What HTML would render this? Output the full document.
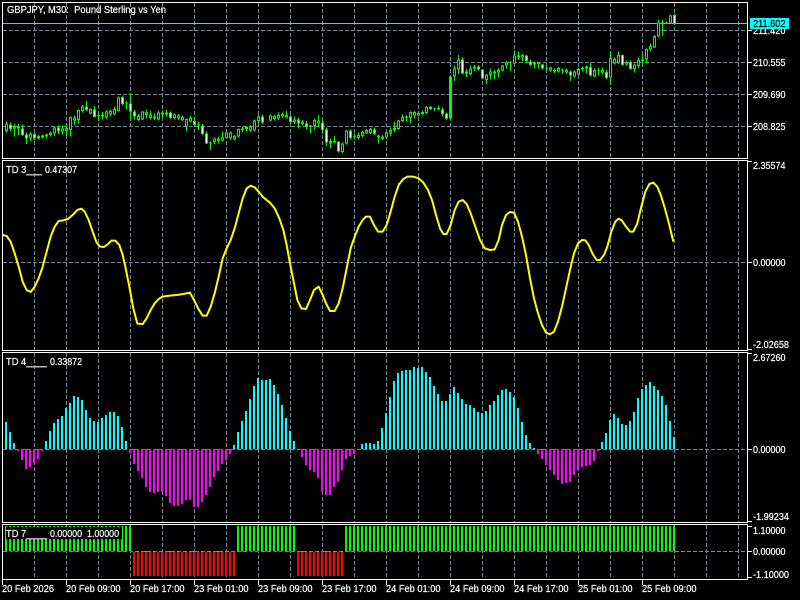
<!DOCTYPE html>
<html>
<head>
<meta charset="utf-8">
<style>
html,body{margin:0;padding:0;background:#000;width:800px;height:600px;overflow:hidden}
svg{position:absolute;left:0;top:0;display:block}
text{font-family:"Liberation Sans",sans-serif;font-size:10px;fill:#fff;stroke:#fff;stroke-width:.2;white-space:pre}
.g{stroke:#778899;stroke-width:1;stroke-dasharray:4 2;fill:none}
.w{stroke:#fff;stroke-width:1;fill:none}
</style>
</head>
<body>
<svg width="800" height="600" viewBox="0 0 800 600" shape-rendering="crispEdges">
<rect width="800" height="600" fill="#000"/>

<!-- vertical grid -->
<path class="g" d="M34.5 3V158M66.5 3V158M98.5 3V158M130.5 3V158M162.5 3V158M194.5 3V158M226.5 3V158M258.5 3V158M290.5 3V158M322.5 3V158M354.5 3V158M386.5 3V158M418.5 3V158M450.5 3V158M482.5 3V158M514.5 3V158M546.5 3V158M578.5 3V158M610.5 3V158M642.5 3V158M674.5 3V158M706.5 3V158M738.5 3V158"/>
<path class="g" d="M34.5 161V350M66.5 161V350M98.5 161V350M130.5 161V350M162.5 161V350M194.5 161V350M226.5 161V350M258.5 161V350M290.5 161V350M322.5 161V350M354.5 161V350M386.5 161V350M418.5 161V350M450.5 161V350M482.5 161V350M514.5 161V350M546.5 161V350M578.5 161V350M610.5 161V350M642.5 161V350M674.5 161V350M706.5 161V350M738.5 161V350"/>
<path class="g" d="M34.5 353V522M66.5 353V522M98.5 353V522M130.5 353V522M162.5 353V522M194.5 353V522M226.5 353V522M258.5 353V522M290.5 353V522M322.5 353V522M354.5 353V522M386.5 353V522M418.5 353V522M450.5 353V522M482.5 353V522M514.5 353V522M546.5 353V522M578.5 353V522M610.5 353V522M642.5 353V522M674.5 353V522M706.5 353V522M738.5 353V522"/>
<path class="g" d="M34.5 525V579M66.5 525V579M98.5 525V579M130.5 525V579M162.5 525V579M194.5 525V579M226.5 525V579M258.5 525V579M290.5 525V579M322.5 525V579M354.5 525V579M386.5 525V579M418.5 525V579M450.5 525V579M482.5 525V579M514.5 525V579M546.5 525V579M578.5 525V579M610.5 525V579M642.5 525V579M674.5 525V579M706.5 525V579M738.5 525V579"/>
<!-- horizontal grid -->
<path class="g" d="M3 30.5H747M3 62.5H747M3 94.5H747M3 126.5H747M3 262.5H747M3 449.5H747M3 551.5H747"/>

<!-- bid line -->
<path d="M3 23.5H747" stroke="#35dcdc" stroke-width="1"/>

<!-- candles -->
<g fill="none" transform="translate(.5 0) scale(.33333)">
<path stroke="#0f0" stroke-width="3" d="M18 365V397M30 368V393M42 372V410M54 372V405M66 373V408M78 397V432M90 396V423M102 397V420M114 405V418M126 403V416M138 400V416M150 394V410M162 378V408M174 376V402M186 378V404M198 372V408M210 349V410M222 347V375M234 328V370M246 315V337M258 303V333M270 325V343M282 318V352M294 338V362M306 336V358M318 330V357M330 328V350M342 320V346M354 290V335M366 288V315M378 305V328M390 281V358M402 330V358M414 342V363M426 333V360M438 328V355M450 333V358M462 340V360M474 333V362M486 332V352M498 330V350M510 334V357M522 340V358M534 342V360M546 347V363M558 355V393M570 348V367M582 350V380M594 365V390M606 372V405M618 395V432M630 425V450M642 412V432M654 410V430M666 395V425M678 395V416M690 395V418M702 405V422M714 385V412M726 380V396M738 378V394M750 375V396M762 359V394M774 345V371M786 343V372"/>
<path stroke="#0f0" stroke-width="9" d="M18 370V393M30 373V387M42 378V385M54 380V385M66 385V405M78 403V416M90 402V416M102 402V416M114 408V416M126 406V413M138 404V410M150 397V405M162 382V400M174 382V395M186 386V394M198 384V393M210 351V390M222 352V362M234 330V360M246 320V333M258 320V330M270 327V340M282 328V351M294 345V348M306 345V350M318 334V352M330 333V343M342 327V343M354 292V333M366 291V312M378 308V310M390 310V334M402 334V350M414 348V360M426 334V358M438 336V345M450 343V354M462 350V356M474 338V358M486 338V344M498 337V343M510 337V354M522 344V354M534 346V356M546 351V360M558 357V380M570 354V365M582 363V375M594 373V377M606 376V402M618 400V430M630 428V431M642 416V426M654 416V423M666 412V422M678 397V414M690 397V416M702 408V418M714 387V410M726 385V390M738 381V387M750 380V392M762 361V392M774 349V363M786 350V368"/>
<path stroke="#fff" stroke-width="3" d="M30 376V384M66 388V402M78 406V413M102 405V413M114 411V413M174 385V392M258 323V327M282 331V348M366 294V309M390 313V331M402 337V347M510 340V351M582 366V372M606 379V399M618 403V427M786 353V365"/>
<path stroke="#000" stroke-width="3" d="M18 373V390M42 381V382M90 405V413M126 409V410M150 400V402M162 385V397M186 389V391M198 387V390M210 354V387M222 355V359M234 333V357M246 323V330M270 330V337M318 337V349M330 336V340M342 330V340M354 295V330M414 351V357M426 337V355M438 339V342M450 346V351M474 341V355M522 347V351M534 349V353M546 354V357M558 360V377M570 357V362M642 419V423M654 419V420M666 415V419M678 400V411M690 400V413M702 411V415M714 390V407M750 383V389M762 364V389M774 352V360"/>
</g>
<g fill="none" transform="translate(267.1667 0) scale(.33333)">
<path stroke="#0f0" stroke-width="3" d="M10 343V365M22 345V362M34 337V360M46 337V354M58 333V356M70 345V370M82 350V372M94 352V385M106 360V377M118 363V388M130 375V400M142 355V388M154 345V382M166 360V400M178 382V438M190 415V445M202 408V430M214 424V457M226 428V460M238 390V433M250 388V418M262 400V418M274 398V417M286 392V412M298 387V402M310 384V402M322 382V405M334 405V430M346 405V420M358 395V417M370 383V408M382 366V396M394 360V390M406 343V366M418 345V365M430 335V369M442 333V355M454 337V350M466 332V346M478 318V342M490 318V330M502 322V333M514 316V330M526 322V350M538 337V360M550 228V358M562 197V243M574 165V222M586 172V224M598 207V231M610 197V225M622 195V213M634 195V212M646 207V237M658 222V252M670 205V237M682 210V237M694 204V232M706 195V215M718 183V206M730 183V215M742 152V192M754 155V180M766 162V183M778 165V190M790 178V198"/>
<path stroke="#0f0" stroke-width="9" d="M10 347V362M22 348V357M34 345V356M46 342V349M58 345V352M70 349V366M82 358V366M94 358V370M106 365V372M118 370V381M130 377V379M142 360V378M154 361V370M166 367V390M178 388V428M190 423V430M202 423V427M214 425V455M226 430V456M238 391V431M250 391V414M262 410V413M274 405V414M286 396V408M298 390V400M310 387V399M322 388V402M334 406V413M346 410V417M358 397V413M370 390V400M382 384V390M394 361V387M406 351V363M418 350V353M430 336V354M442 336V347M454 339V347M466 336V342M478 321V339M490 321V327M502 324V326M514 324V328M526 328V342M538 340V356M550 229V356M562 205V230M574 178V208M586 178V220M598 215V221M610 205V222M622 200V206M634 199V208M646 208V235M658 224V240M670 214V225M682 214V221M694 210V218M706 196V212M718 187V197M730 187V189M742 166V190M754 166V172M766 165V172M778 167V183M790 184V195"/>
<path stroke="#fff" stroke-width="3" d="M70 352V363M94 361V367M118 373V378M166 370V387M178 391V425M214 428V452M250 394V411M322 391V399M526 331V339M538 343V353M586 181V217M634 202V205M646 211V232M778 170V180M790 187V192"/>
<path stroke="#000" stroke-width="3" d="M10 350V359M22 351V354M34 348V353M46 345V346M58 348V349M82 361V363M106 368V369M142 363V375M154 364V367M226 433V453M238 394V428M274 408V411M286 399V405M298 393V397M310 390V396M346 413V414M358 400V410M370 393V397M394 364V384M406 354V360M430 339V351M442 339V344M454 342V344M466 339V339M478 324V336M490 324V324M562 208V227M574 181V205M610 208V219M658 227V237M670 217V222M682 217V218M694 213V215M706 199V209M718 190V194M742 169V187M754 169V169M766 168V169"/>
</g>
<g fill="none" transform="translate(533.5 0) scale(.33333)">
<path stroke="#0f0" stroke-width="3" d="M3 185V206M15 186V206M27 192V208M39 200V212M51 201V216M63 205V219M75 201V218M87 205V222M99 205V220M111 211V243M123 211V232M135 204V227M147 200V214M159 197V220M171 188V229M183 206V232M195 203V227M207 203V223M219 208V237M231 155V249M243 172V193M255 154V192M267 163V197M279 181V197M291 182V210M303 190V217M315 172V204M327 163V197M339 145V190M351 130V153M363 105V144M375 58V112M387 60V108M399 65V72M411 43V72M423 42V74"/>
<path stroke="#0f0" stroke-width="9" d="M3 187V193M15 188V192M27 194V206M39 205V207M51 203V212M63 210V215M75 204V215M87 209V212M99 210V218M111 214V226M123 215V229M135 207V224M147 204V208M159 200V205M171 201V227M183 210V229M195 210V212M207 210V218M219 216V234M231 174V233M243 177V190M255 165V188M267 165V195M279 186V194M291 186V207M303 194V207M315 180V198M327 178V183M339 147V178M351 138V149M363 108V142M375 67V110M387 67V70M399 67V70M411 47V70M423 45V72"/>
<path stroke="#fff" stroke-width="3" d="M27 197V203M111 217V223M171 204V224M219 219V231M267 168V192M291 189V204M423 48V69"/>
<path stroke="#000" stroke-width="3" d="M51 206V209M75 207V212M99 213V215M123 218V226M135 210V221M183 213V226M207 213V215M231 177V230M243 180V187M255 168V185M279 189V191M303 197V204M315 183V195M339 150V175M351 141V146M363 111V139M375 70V107M411 50V67"/>
</g>

<!-- TD3 line -->
<g fill="none" shape-rendering="auto">
<polyline transform="translate(0 160) scale(.33333)" stroke="#ff0" stroke-width="6" stroke-linejoin="round" points="8,225 20,228 32,245 44,280 56,320 68,365 80,390 92,396 104,380 116,355 128,320 140,275 152,230 164,200 176,183 190,181 204,177 220,163 232,150 244,146 254,155 266,180 278,215 290,248 300,260 312,261 324,252 334,242 346,242 358,255 368,285 376,320 388,380 400,445 412,491 428,492 440,475 452,450 464,430 476,417 488,410 510,407 530,405 550,402 570,398 582,420 596,448 608,467 620,467 632,440 644,400 656,350 668,295 680,265 692,240 704,205 716,160 728,115 740,85 752,77 764,82 776,95 790,112 810,128 824,145 838,175 850,210 860,255 870,310 880,360 892,420 904,445 918,447 930,420 942,390 956,380 968,405 978,430 990,453 1004,453 1016,430 1028,385 1040,325 1052,265 1064,230 1076,200 1088,180 1098,170 1110,170 1122,195 1134,215 1148,215 1160,195 1172,155 1184,110 1198,70"/>
<polyline transform="translate(400 160) scale(.33333)" stroke="#ff0" stroke-width="6" stroke-linejoin="round" points="-2,72 10,57 22,50 40,50 56,55 70,68 84,90 96,120 108,165 120,205 130,222 140,222 152,195 164,150 176,125 188,120 200,132 212,160 226,200 240,240 254,265 270,270 284,268 296,240 306,195 318,165 330,156 342,158 354,185 366,230 378,285 390,355 402,415 414,460 426,495 438,518 450,523 462,515 474,485 486,440 498,385 510,330 522,280 534,250 546,240 556,241 566,255 578,282 590,300 600,300 612,285 622,260 634,215 646,185 656,176 666,182 678,200 690,215 700,215 712,190 724,140 736,95 748,72 760,68 772,80 784,110 796,150 808,195 820,245"/>
</g>

<!-- TD4 histogram -->
<path fill="none" stroke="#0ff" stroke-width="2" d="M6 422V449M10 432V449M14 443V449M46 441V449M50 431V449M54 423V449M58 419V449M62 416V449M66 408V449M70 403V449M74 396V449M78 397V449M82 400V449M86 410V449M90 418V449M94 421V449M98 422V449M102 418V449M106 415V449M110 412V449M114 412V449M118 416V449M122 427V449M126 441V449M234 445V449M238 432V449M242 421V449M246 411V449M250 399V449M254 386V449M258 378V449M262 380V449M266 380V449M270 379V449M274 385V449M278 394V449M282 405V449M286 418V449M290 431V449M294 441V449M362 444V449M366 443V449M370 443V449M374 444V449M378 441V449M382 428V449M386 413V449M390 397V449M394 381V449M398 373V449M402 371V449M406 370V449M410 370V449M414 367V449M418 368V449M422 367V449M426 372V449M430 377V449M434 386V449M438 394V449M442 401V449M446 401V449M450 394V449M454 387V449M458 393V449M462 399V449M466 404V449M470 405V449M474 408V449M478 412V449M482 413V449M486 411V449M490 405V449M494 401V449M498 395V449M502 390V449M506 389V449M510 392V449M514 397V449M518 408V449M522 422V449M526 435V449M530 443V449M534 448V449M602 442V449M606 433V449M610 420V449M614 414V449M618 418V449M622 424V449M626 425V449M630 421V449M634 412V449M638 398V449M642 389V449M646 385V449M650 382V449M654 386V449M658 390V449M662 396V449M666 405V449M670 421V449M674 437V449"/>
<path fill="none" stroke="#f0f" stroke-width="2" d="M18 449V451M22 449V460M26 449V469M30 449V467M34 449V463M38 449V459M42 449V451M130 449V453M134 449V464M138 449V471M142 449V478M146 449V487M150 449V492M154 449V493M158 449V492M162 449V492M166 449V496M170 449V503M174 449V506M178 449V506M182 449V504M186 449V500M190 449V500M194 449V507M198 449V507M202 449V502M206 449V495M210 449V487M214 449V477M218 449V471M222 449V464M226 449V460M230 449V454M302 449V457M306 449V465M310 449V470M314 449V472M318 449V478M322 449V492M326 449V495M330 449V495M334 449V487M338 449V482M342 449V470M346 449V459M350 449V456M354 449V454M538 449V454M542 449V459M546 449V465M550 449V470M554 449V475M558 449V480M562 449V484M566 449V483M570 449V482M574 449V475M578 449V470M582 449V467M586 449V466M590 449V465M594 449V461M598 449V451"/>

<!-- TD7 bars -->
<g fill="none">
<path stroke="#0f0" stroke-width="25" stroke-dasharray="2 2" d="M5 538.5H132M237 538.5H296M345 538.5H676"/>
<path stroke="#f00" stroke-width="24" stroke-dasharray="2 2" d="M133 564H236M297 564H344"/>
<path stroke="#f00" stroke-width="1" stroke-dasharray="2 6" d="M9 551.5H132M241 551.5H296M349 551.5H676"/>
<path stroke="#0f0" stroke-width="1" stroke-dasharray="2 6" d="M137 551.5H236M301 551.5H344"/>
</g>
<rect x="6" y="527" width="116" height="12" fill="#000"/>

<!-- frames -->
<path class="w" d="M2.5 2.5H747.5V158.5H2.5ZM2.5 160.5H747.5V350.5H2.5ZM2.5 352.5H747.5V522.5H2.5ZM2.5 524.5H747.5V579.5H2.5Z"/>
<!-- ticks -->
<path class="w" d="M748 30.5H752M748 62.5H752M748 94.5H752M748 126.5H752M748 161.5H752M748 262.5H752M748 349.5H752M748 353.5H752M748 449.5H752M748 521.5H752M748 526.5H752M748 551.5H752M748 577.5H752M2.5 580V585M66.5 580V585M130.5 580V585M194.5 580V585M258.5 580V585M322.5 580V585M386.5 580V585M450.5 580V585M514.5 580V585M578.5 580V585M642.5 580V585"/>

<!-- texts -->
<g shape-rendering="auto">
<text x="7" y="13" textLength="159" lengthAdjust="spacingAndGlyphs">GBPJPY, M30:  Pound Sterling vs Yen</text>
<text x="6" y="173" textLength="36" lengthAdjust="spacingAndGlyphs">TD 3___</text>
<text x="45" y="173" textLength="32" lengthAdjust="spacingAndGlyphs">0.47307</text>
<text x="6" y="365" textLength="41" lengthAdjust="spacingAndGlyphs">TD 4____</text>
<text x="50" y="365" textLength="32" lengthAdjust="spacingAndGlyphs">0.33872</text>
<text x="6" y="537" textLength="41" lengthAdjust="spacingAndGlyphs">TD 7____</text>
<text x="50" y="537" textLength="32" lengthAdjust="spacingAndGlyphs">0.00000</text>
<text x="87" y="537" textLength="32" lengthAdjust="spacingAndGlyphs">1.00000</text>

<text x="753" y="34" textLength="32.5" lengthAdjust="spacingAndGlyphs">211.420</text>
<text x="753" y="66" textLength="32.5" lengthAdjust="spacingAndGlyphs">210.555</text>
<text x="753" y="98" textLength="32.5" lengthAdjust="spacingAndGlyphs">209.690</text>
<text x="753" y="130" textLength="32.5" lengthAdjust="spacingAndGlyphs">208.825</text>
<rect x="750" y="18" width="39" height="11" fill="#0ff" shape-rendering="crispEdges"/>
<text x="753" y="27" textLength="32.5" lengthAdjust="spacingAndGlyphs" style="fill:#000;stroke:#000">211.602</text>
<text x="753" y="169" textLength="32.5" lengthAdjust="spacingAndGlyphs">2.35574</text>
<text x="753" y="266" textLength="32.5" lengthAdjust="spacingAndGlyphs">0.00000</text>
<text x="753" y="348" textLength="36" lengthAdjust="spacingAndGlyphs">-2.02658</text>
<text x="753" y="361" textLength="32.5" lengthAdjust="spacingAndGlyphs">2.67260</text>
<text x="753" y="453" textLength="32.5" lengthAdjust="spacingAndGlyphs">0.00000</text>
<text x="753" y="520" textLength="36" lengthAdjust="spacingAndGlyphs">-1.99234</text>
<text x="753" y="534" textLength="32.5" lengthAdjust="spacingAndGlyphs">1.10000</text>
<text x="753" y="555" textLength="32.5" lengthAdjust="spacingAndGlyphs">0.00000</text>
<text x="753" y="578" textLength="36" lengthAdjust="spacingAndGlyphs">-1.10000</text>

<text x="2" y="592" textLength="52" lengthAdjust="spacingAndGlyphs">20 Feb 2026</text>
<text x="66" y="592" textLength="54.5" lengthAdjust="spacingAndGlyphs">20 Feb 09:00</text>
<text x="130" y="592" textLength="54.5" lengthAdjust="spacingAndGlyphs">20 Feb 17:00</text>
<text x="194" y="592" textLength="54.5" lengthAdjust="spacingAndGlyphs">23 Feb 01:00</text>
<text x="258" y="592" textLength="54.5" lengthAdjust="spacingAndGlyphs">23 Feb 09:00</text>
<text x="322" y="592" textLength="54.5" lengthAdjust="spacingAndGlyphs">23 Feb 17:00</text>
<text x="386" y="592" textLength="54.5" lengthAdjust="spacingAndGlyphs">24 Feb 01:00</text>
<text x="450" y="592" textLength="54.5" lengthAdjust="spacingAndGlyphs">24 Feb 09:00</text>
<text x="514" y="592" textLength="54.5" lengthAdjust="spacingAndGlyphs">24 Feb 17:00</text>
<text x="578" y="592" textLength="54.5" lengthAdjust="spacingAndGlyphs">25 Feb 01:00</text>
<text x="642" y="592" textLength="54.5" lengthAdjust="spacingAndGlyphs">25 Feb 09:00</text>
</g>
</svg>
</body>
</html>
